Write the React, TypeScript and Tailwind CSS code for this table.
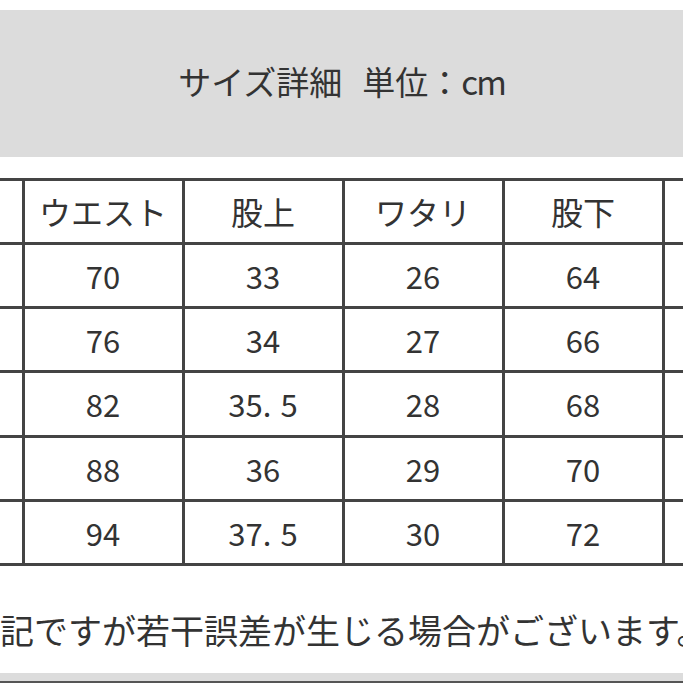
const headers = ["サイズ", "ウエスト", "股上", "ワタリ", "股下", "裾幅"];

const rows = [
  ["S", "70", "33", "26", "64", "15"],
  ["M", "76", "34", "27", "66", "16"],
  ["L", "82", "35.5", "28", "68", "17"],
  ["XL", "88", "36", "29", "70", "18"],
  ["XXL", "94", "37.5", "30", "72", "19"],
];

const jp = "font-['Noto_Sans_CJK_JP',sans-serif]";

// 小数点の後ろに少し隙間を空ける（元画像の等幅っぽい見た目に寄せる）
const Value = ({ v }: { v: string }) => {
  if (!v.includes(".")) return <>{v}</>;
  const [a, b] = v.split(".");
  return (
    <>
      {a}
      <span className="mr-[9px]">.</span>
      {b}
    </>
  );
};

const App = () => {
  return (
    <div className={`w-[683px] h-[683px] bg-white overflow-hidden flex flex-col text-[#333] ${jp}`}>
      {/* タイトル */}
      <div className="mt-[10px] h-[147px] bg-[#dcdcdc] flex items-center justify-center">
        <p className="text-[33px] leading-none flex items-baseline gap-[20px] mt-[-4px]">
          <span>サイズ詳細</span>
          <span>
            単位：<span className="tracking-[-2px]">cm</span>
          </span>
        </p>
      </div>

      {/* サイズ表 */}
      <div className="mt-[20.5px] w-full overflow-hidden">
        <div className="ml-[-138.5px] w-[963px] grid grid-cols-[repeat(6,157px)] gap-[3px] bg-[#444] p-[3px]">
          {headers.map((h) => (
            <div key={h} className="bg-white h-[61.25px] flex items-center justify-center text-[32px] leading-none">
              {h}
            </div>
          ))}
          {rows.map((row, i) =>
            row.map((c, j) => (
              <div
                key={`${i}-${j}`}
                className="bg-white h-[61.25px] flex items-center justify-center text-[31px] leading-none"
              >
                <Value v={c} />
              </div>
            ))
          )}
        </div>
      </div>

      {/* 注意書き */}
      <div className="mt-[44px] h-[40px] flex items-center whitespace-nowrap overflow-hidden">
        <p className="text-[34px] leading-none">記ですが若干誤差が生じる場合がございます。</p>
      </div>

      <div className="mt-auto h-[10px] bg-[#dcdcdc] border-b-2 border-[#555]" />
    </div>
  );
};

export default App;
